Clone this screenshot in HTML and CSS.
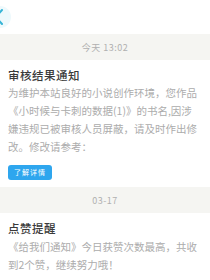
FILE: index.html
```html
<!DOCTYPE html>
<html lang="zh-CN">
<head>
<meta charset="utf-8">
<link rel="stylesheet" href="styles.css">
</head>
<body>
<div class="page">
  <header class="topbar">
    <svg class="back" width="16" height="24" viewBox="0 0 16 24"><circle cx="0" cy="12" r="11" fill="#eef9fc"/><path d="M2 5 L-4 12 L2 19" fill="none" stroke="#36b4d6" stroke-width="2" stroke-linecap="round" stroke-linejoin="round"/></svg>
  </header>
  <div class="date">今天 13:02</div>
  <section class="card">
    <h2 class="title">审核结果通知</h2>
    <p class="text">为维护本站良好的小说创作环境，您作品《小时候与卡刺的数据(1)》的书名,因涉嫌违规已被审核人员屏蔽，请及时作出修改。修改请参考：</p>
    <span class="btn">了解详情</span>
  </section>
  <div class="date">03-17</div>
  <section class="card card2">
    <h2 class="title">点赞提醒</h2>
    <p class="text">《给我们通知》今日获赞次数最高，共收到2个赞，继续努力哦！</p>
  </section>
</div>
</body>
</html>
```
FILE: styles.css
```css
* { box-sizing: border-box; }
html, body { margin: 0; padding: 0; }
body {
  background: #f5f5f2;
  font-family: "Noto Sans CJK SC", "Noto Sans", sans-serif;
  width: 210px;
  height: 280px;
  overflow: hidden;
}
.topbar {
  height: 34px;
  background: #fff;
  display: flex;
  align-items: center;
}
.back { display: block; }
.date {
  height: 26px;
  display: flex;
  align-items: center;
  justify-content: center;
  font-size: 9px;
  color: #b0b0b0;
  letter-spacing: 0.5px;
}
.card {
  background: #fff;
  padding: 6px 8px 7px 8px;
}
.title {
  margin: 0;
  font-size: 11.5px;
  line-height: 18px;
  font-weight: 500;
  color: #3a3a3a;
  letter-spacing: 0.5px;
}
.text {
  margin: 0;
  font-size: 10.5px;
  line-height: 18px;
  color: #acacac;
}
.btn {
  display: inline-flex;
  align-items: center;
  justify-content: center;
  margin-top: 4px;
  width: 44px;
  height: 15px;
  border-radius: 3px;
  background: #2ea6ee;
  color: #fff;
  font-size: 7px;
  letter-spacing: 1px;
}
.card2 .title { margin-bottom: 1px; }
.card2 { padding-bottom: 6px; }
```
